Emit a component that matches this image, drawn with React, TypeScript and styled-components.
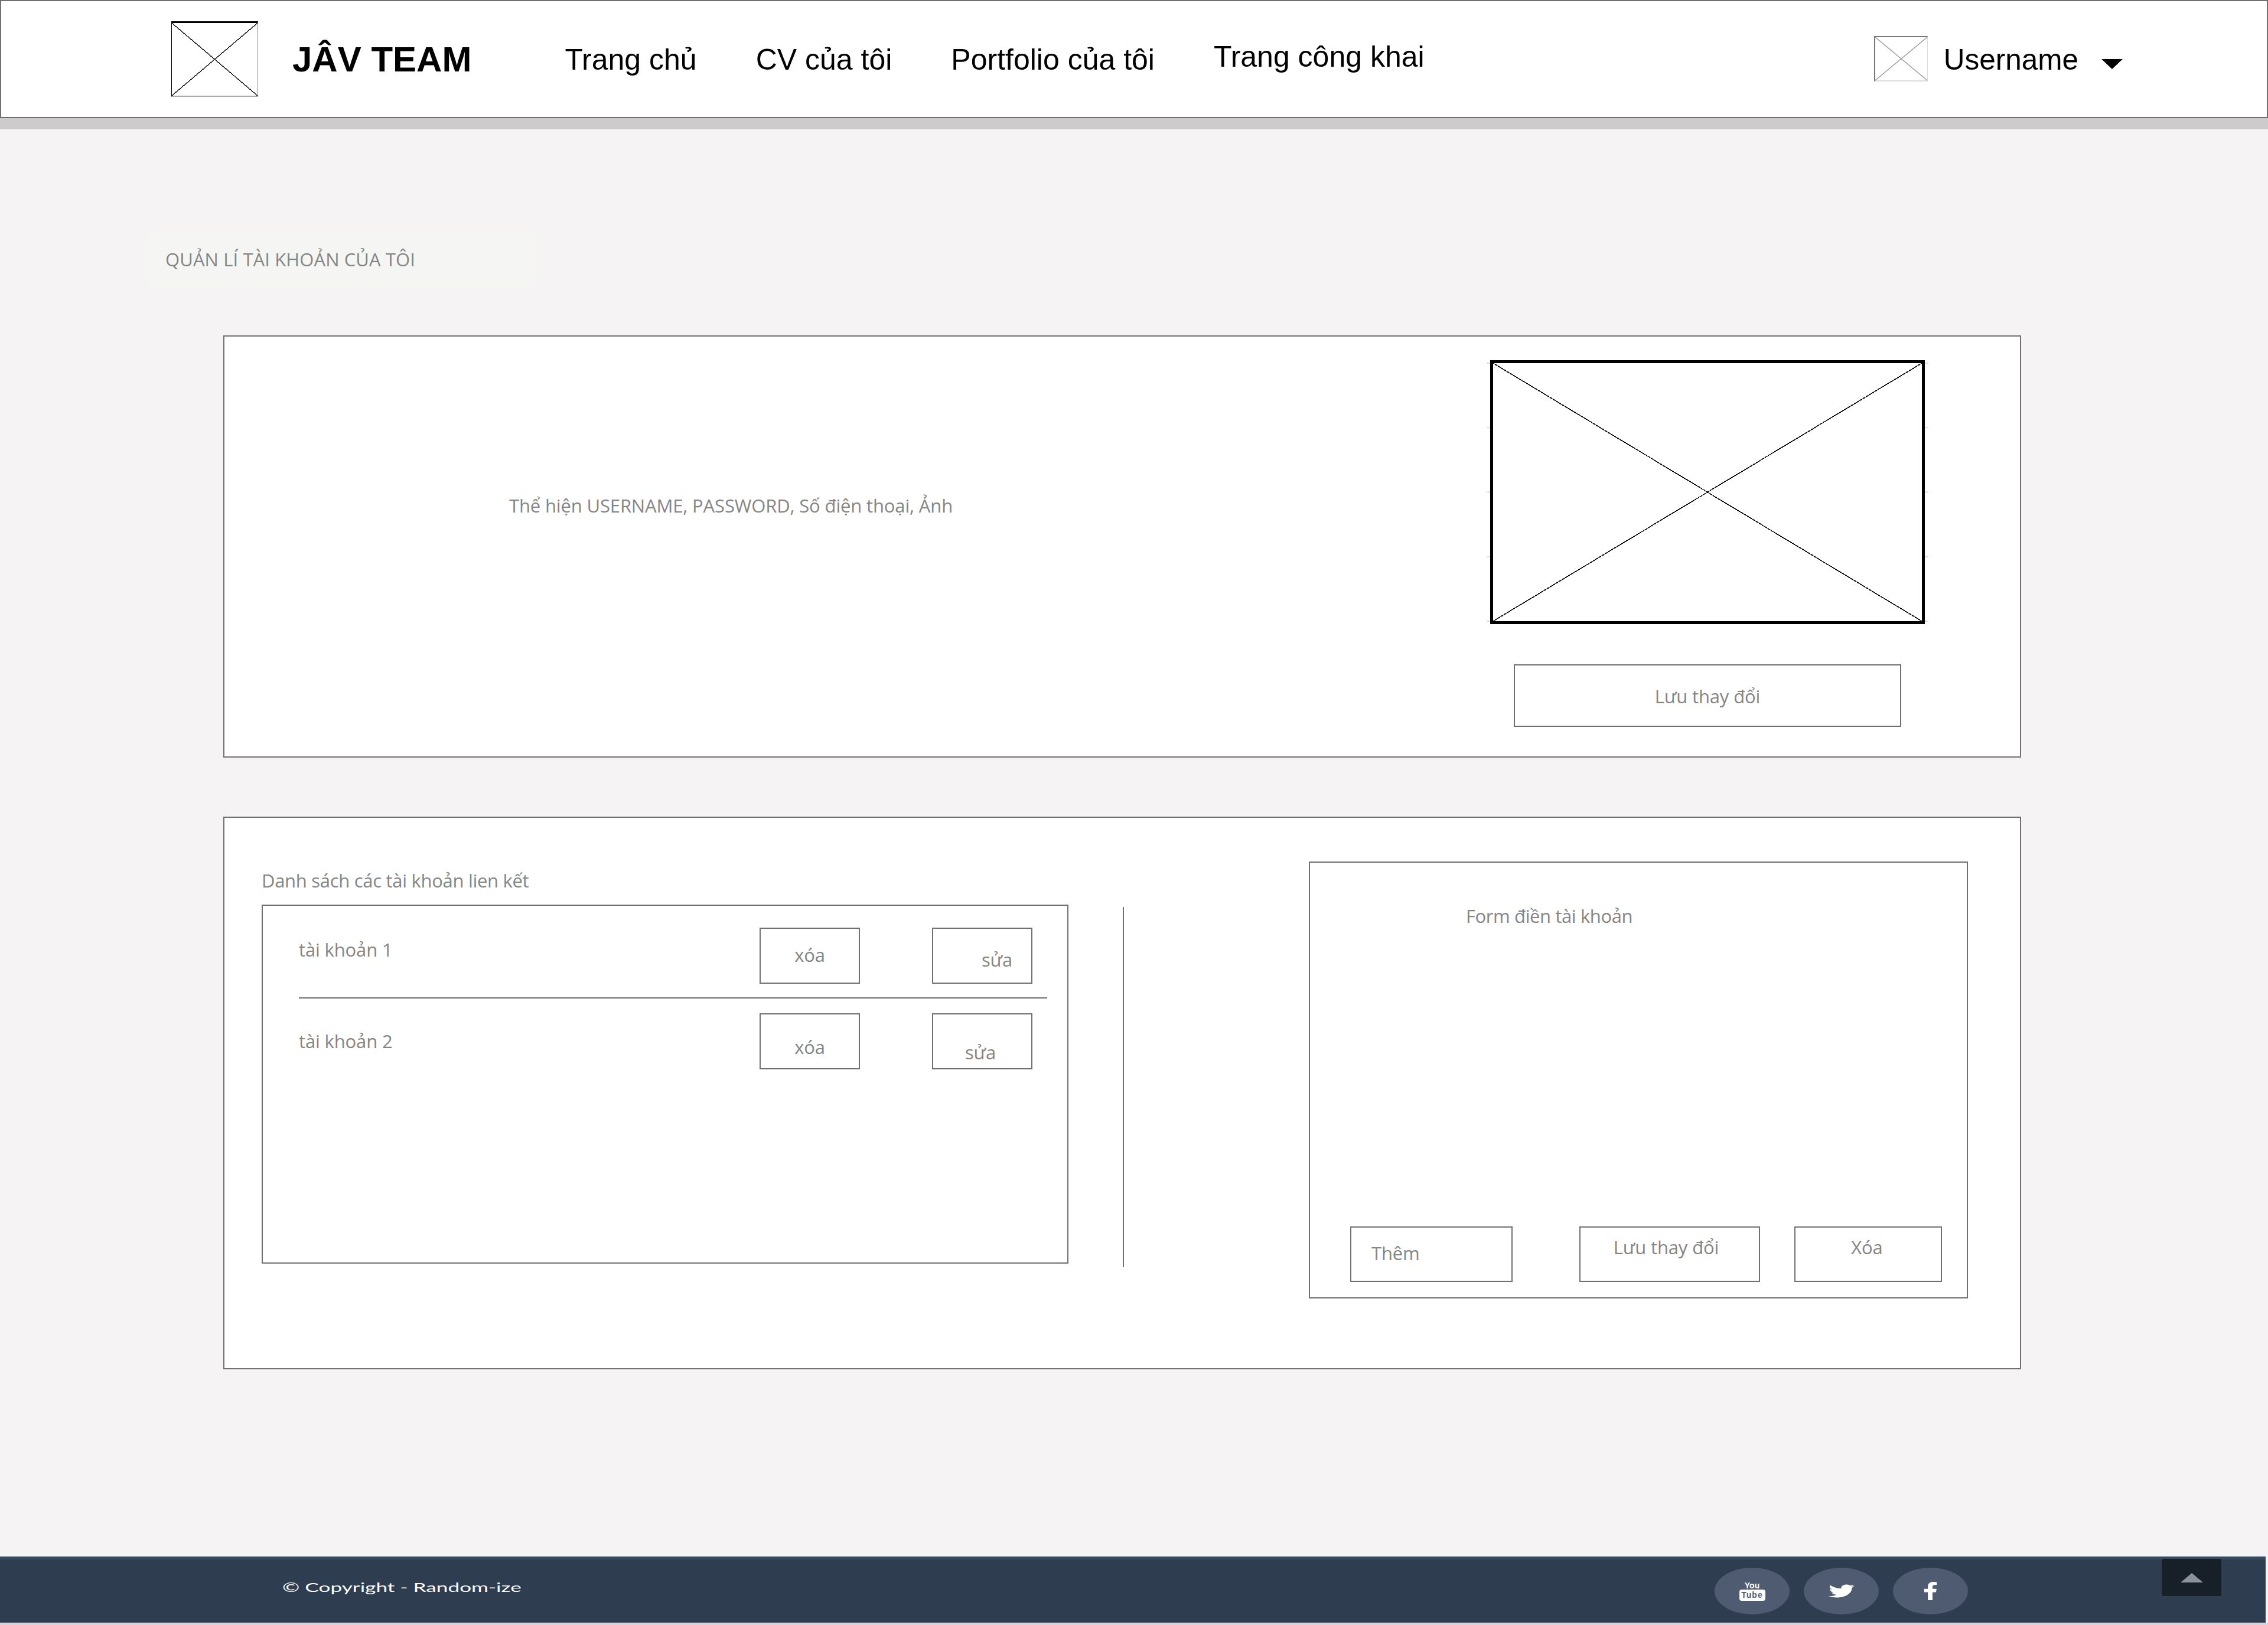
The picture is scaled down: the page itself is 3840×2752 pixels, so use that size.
import React from "react";
import styled, { createGlobalStyle } from "styled-components";
import { FaFacebookF, FaTwitter } from "react-icons/fa";

const LINE = "#707070";
const TEXT = "#858585";

const GlobalStyle = createGlobalStyle`
  html, body {
    margin: 0;
    padding: 0;
    background: #f5f3f4;
  }
  * {
    box-sizing: border-box;
  }
`;

type CrossProps = {
  stroke: string;
  ticks?: boolean;
  crisp?: boolean;
};

const Cross: React.FC<CrossProps> = ({ stroke, ticks, crisp }) => {
  const rendering = crisp ? "crispEdges" : "auto";
  return (
    <SCross viewBox="0 0 100 100" preserveAspectRatio="none">
      {ticks &&
        [0, 25, 50, 75, 100].flatMap((p) => [
          <line key={`l${p}`} x1="-1.5" x2="-0.7" y1={p} y2={p} stroke="#ddd" strokeWidth="2" vectorEffect="non-scaling-stroke" />,
          <line key={`r${p}`} x1="100.7" x2="101.5" y1={p} y2={p} stroke="#ddd" strokeWidth="2" vectorEffect="non-scaling-stroke" />,
        ])}
      <line x1="0" y1="0" x2="100" y2="100" stroke={stroke} strokeWidth="1.5" vectorEffect="non-scaling-stroke" shapeRendering={rendering} />
      <line x1="100" y1="0" x2="0" y2="100" stroke={stroke} strokeWidth="1.5" vectorEffect="non-scaling-stroke" shapeRendering={rendering} />
    </SCross>
  );
};

const YoutubeMark: React.FC = () => (
  <SYoutube>
    <SYou>You</SYou>
    <STube>Tube</STube>
  </SYoutube>
);

const App: React.FC = () => {
  return (
    <SPage>
      <GlobalStyle />
      <SHeader>
        <SLogo>
          <Cross stroke="#222" crisp />
        </SLogo>
        <SBrand>JÂV TEAM</SBrand>
        <SNav>
          <SNavItem>Trang chủ</SNavItem>
          <SNavItem>CV của tôi</SNavItem>
          <SNavItem>Portfolio của tôi</SNavItem>
          <SNavItem $raised>Trang công khai</SNavItem>
        </SNav>
        <SUser>
          <SAvatar>
            <Cross stroke="#9a9a9a" />
          </SAvatar>
          <SUserName>Username</SUserName>
          <SCaret />
        </SUser>
      </SHeader>
      <SHeaderShadow />

      <SMain>
        <SPageTitle>
          <SPageTitleText>QUẢN LÍ TÀI KHOẢN CỦA TÔI</SPageTitleText>
        </SPageTitle>

        <SProfileCard>
          <SProfileInfo>
            <SText>Thể hiện USERNAME, PASSWORD, Số điện thoại, Ảnh</SText>
          </SProfileInfo>
          <SProfileSide>
            <SPhoto>
              <Cross stroke="#000" ticks crisp />
            </SPhoto>
            <SSaveButton>Lưu thay đổi</SSaveButton>
          </SProfileSide>
        </SProfileCard>

        <SAccountsCard>
          <SListColumn>
            <SListTitle>Danh sách các tài khoản lien kết</SListTitle>
            <SListBox>
              <SRow $top={37}>
                <SRowLabel $top={17}>tài khoản 1</SRowLabel>
                <SRowButton $pad="0 0 4px 0">xóa</SRowButton>
                <SRowButton $pad="12px 0 0 50px">sửa</SRowButton>
              </SRow>
              <SRowDivider />
              <SRow $top={25}>
                <SRowLabel $top={27}>tài khoản 2</SRowLabel>
                <SRowButton $pad="18px 0 0 0">xóa</SRowButton>
                <SRowButton $pad="36px 6px 0 0">sửa</SRowButton>
              </SRow>
            </SListBox>
          </SListColumn>
          <SColumnRule />
          <SFormBox>
            <SFormTitle>Form điền tài khoản</SFormTitle>
            <SFormActions>
              <SFormButton $width={275} $pad="0 0 4px 34px" $justify="flex-start">
                Thêm
              </SFormButton>
              <SFormButton $width={306} $gap={113} $pad="0 12px 24px 0">
                Lưu thay đổi
              </SFormButton>
              <SFormButton $width={250} $gap={58} $pad="0 4px 24px 0">
                Xóa
              </SFormButton>
            </SFormActions>
          </SFormBox>
        </SAccountsCard>
      </SMain>

      <SFooter>
        <SCopyright>© Copyright - Random-ize</SCopyright>
        <SSocials>
          <SSocial>
            <YoutubeMark />
          </SSocial>
          <SSocial>
            <STwitterIcon preserveAspectRatio="none" />
          </SSocial>
          <SSocial>
            <SFacebookIcon preserveAspectRatio="none" />
          </SSocial>
        </SSocials>
        <SBackToTop>
          <SBackArrow />
        </SBackToTop>
      </SFooter>
      <SFooterEdge />
    </SPage>
  );
};

export default App;

const SPage = styled.div`
  display: flex;
  flex-direction: column;
  width: 3840px;
  height: 2752px;
  overflow: hidden;
  background: #f5f3f4;
  font-family: "Open Sans", "Noto Sans", sans-serif;
`;

const SCross = styled.svg`
  display: block;
  width: 100%;
  height: 100%;
  overflow: visible;
`;

/* header */
const SHeader = styled.header`
  display: flex;
  align-items: center;
  flex: none;
  height: 200px;
  padding: 0 244px 0 288px;
  background: #fff;
  border: 2px solid ${LINE};
  font-family: "Liberation Sans", Arial, sans-serif;
  color: #000;
`;
const SHeaderShadow = styled.div`
  flex: none;
  height: 19px;
  background: #cdcbcc;
`;
const SLogo = styled.div`
  flex: none;
  width: 147px;
  height: 128px;
  border-style: solid;
  border-width: 3px 1px 2px 1px;
  border-color: #000 #888 #aaa #000;
`;
const SBrand = styled.div`
  margin-left: 58px;
  font-size: 60px;
  font-weight: 700;
  white-space: nowrap;
`;
const SNav = styled.nav`
  display: flex;
  align-items: flex-start;
  gap: 100px;
  margin: 0 0 4px 158px;
`;
const SNavItem = styled.a<{ $raised?: boolean }>`
  font-size: 50px;
  white-space: nowrap;
  margin-top: ${(p) => (p.$raised ? "0" : "5px")};
`;
const SUser = styled.div`
  display: flex;
  align-items: center;
  margin-left: auto;
`;
const SAvatar = styled.div`
  width: 91px;
  height: 77px;
  margin-top: -2px;
  border-style: solid;
  border-width: 2px 1px 2px 2px;
  border-color: #777 #ddd #ddd #777;
`;
const SUserName = styled.span`
  margin-left: 27px;
  font-size: 49.5px;
`;
const SCaret = styled.span`
  margin: 17px 0 0 39px;
  border-style: solid;
  border-width: 17px 18px 0;
  border-color: #000 transparent transparent;
`;

/* main */
const SMain = styled.main`
  flex: 1;
  padding: 174px 0 0 250px;
`;
const SText = styled.span`
  font-size: 31px;
  color: ${TEXT};
  white-space: nowrap;
  letter-spacing: -0.15px;
`;
const SPageTitle = styled.div`
  display: flex;
  align-items: center;
  width: 658px;
  height: 95px;
  padding: 0 0 3px 30px;
  background: #f5f5f3;
  border-radius: 8px;
`;
const SPageTitleText = styled(SText)`
  letter-spacing: 0.1px;
`;
const SCard = styled.section`
  display: flex;
  align-items: flex-start;
  width: 3044px;
  margin-left: 128px;
  background: #fff;
  border: 2px solid ${LINE};
`;
const SProfileCard = styled(SCard)`
  height: 715px;
  margin-top: 80px;
`;
const SProfileInfo = styled.div`
  padding: 265px 0 0 482px;
`;
const SProfileSide = styled.div`
  display: flex;
  flex-direction: column;
  align-items: center;
  width: 736px;
  margin: 40px 161px 0 auto;
`;
const SPhoto = styled.div`
  width: 736px;
  height: 447px;
  border: 5px solid #000;
`;
const SButtonBase = styled.div`
  display: flex;
  align-items: center;
  justify-content: center;
  flex: none;
  background: #fff;
  border: 2px solid ${LINE};
  font-size: 31px;
  color: ${TEXT};
  letter-spacing: -0.15px;
  white-space: nowrap;
`;
const SSaveButton = styled(SButtonBase)`
  width: 656px;
  height: 106px;
  margin-top: 68px;
  padding-top: 2px;
`;

const SAccountsCard = styled(SCard)`
  height: 936px;
  margin-top: 100px;
`;
const SListColumn = styled.div`
  flex: none;
  width: 1366px;
  margin: 84px 0 0 63px;
`;
const SListTitle = styled(SText)`
  display: block;
  height: 63px;
  line-height: 44px;
  letter-spacing: -0.3px;
`;
const SListBox = styled.div`
  height: 608px;
  border: 2px solid ${LINE};
`;
const SRow = styled.div<{ $top: number }>`
  display: flex;
  align-items: flex-start;
  gap: 122px;
  height: 95px;
  margin-top: ${(p) => p.$top}px;
  padding: 0 59px 0 61px;
`;
const SRowLabel = styled(SText)<{ $top: number }>`
  margin: ${(p) => p.$top}px auto 0 0;
  line-height: 40px;
`;
const SRowButton = styled(SButtonBase)<{ $pad?: string }>`
  width: 170px;
  height: 95px;
  padding: ${(p) => p.$pad ?? "0"};
`;
const SRowDivider = styled.div`
  height: 2px;
  margin: 23px 34px 0 61px;
  background: ${LINE};
`;
const SColumnRule = styled.div`
  flex: none;
  width: 2px;
  height: 610px;
  margin: 151px 0 0 92px;
  background: ${LINE};
`;
const SFormBox = styled.div`
  display: flex;
  flex-direction: column;
  flex: none;
  width: 1116px;
  height: 740px;
  margin: 74px 0 0 313px;
  border: 2px solid ${LINE};
`;
const SFormTitle = styled(SText)`
  margin: 70px 0 0 264px;
  line-height: 40px;
  letter-spacing: -0.4px;
`;
const SFormActions = styled.div`
  display: flex;
  margin-top: auto;
  padding: 0 0 26px 68px;
`;
const SFormButton = styled(SButtonBase)<{ $width: number; $gap?: number; $pad?: string; $justify?: string }>`
  width: ${(p) => p.$width}px;
  height: 94px;
  margin-left: ${(p) => p.$gap ?? 0}px;
  padding: ${(p) => p.$pad ?? "0"};
  justify-content: ${(p) => p.$justify ?? "center"};
`;

/* footer */
const SFooter = styled.footer`
  position: relative;
  display: flex;
  align-items: center;
  flex: none;
  width: 3836px;
  height: 112px;
  padding-left: 478px;
  background: #2e3e50;
  border-top: 5px solid #36495f;
`;
const SFooterEdge = styled.div`
  flex: none;
  height: 4px;
  background: #d6d6da;
`;
const SCopyright = styled.div`
  width: 402px;
  margin-top: -14px;
  font-family: Lato, "Open Sans", sans-serif;
  font-size: 22px;
  color: #fff;
  white-space: nowrap;
  transform: scaleX(1.6);
  transform-origin: left center;
`;
const SSocials = styled.div`
  display: flex;
  gap: 24px;
  margin: 0 0 0 2023px;
`;
const SSocial = styled.a`
  display: flex;
  align-items: center;
  justify-content: center;
  width: 127px;
  height: 79px;
  border-radius: 50%;
  background: #4f5b70;
  color: #fff;
`;
const STwitterIcon = styled(FaTwitter)`
  width: 44px;
  height: 27px;
`;
const SFacebookIcon = styled(FaFacebookF)`
  width: 25px;
  height: 31px;
`;
const SYoutube = styled.div`
  display: flex;
  flex-direction: column;
  align-items: center;
  width: 44px;
  font-family: "Liberation Sans", sans-serif;
  font-weight: 700;
`;
const SYou = styled.span`
  font-size: 14px;
  line-height: 13px;
  color: #fff;
`;
const STube = styled.span`
  width: 44px;
  height: 19px;
  border-radius: 4px;
  background: #fff;
  color: #4f5b70;
  font-size: 14px;
  line-height: 19px;
  letter-spacing: 1px;
  text-align: center;
`;
const SBackToTop = styled.div`
  position: absolute;
  top: -1px;
  right: 75px;
  display: flex;
  align-items: center;
  justify-content: center;
  width: 101px;
  height: 63px;
  border-radius: 3px;
  background: #171f28;
`;
const SBackArrow = styled.span`
  border-style: solid;
  border-width: 0 19px 16px;
  border-color: transparent transparent #8b929c;
`;
